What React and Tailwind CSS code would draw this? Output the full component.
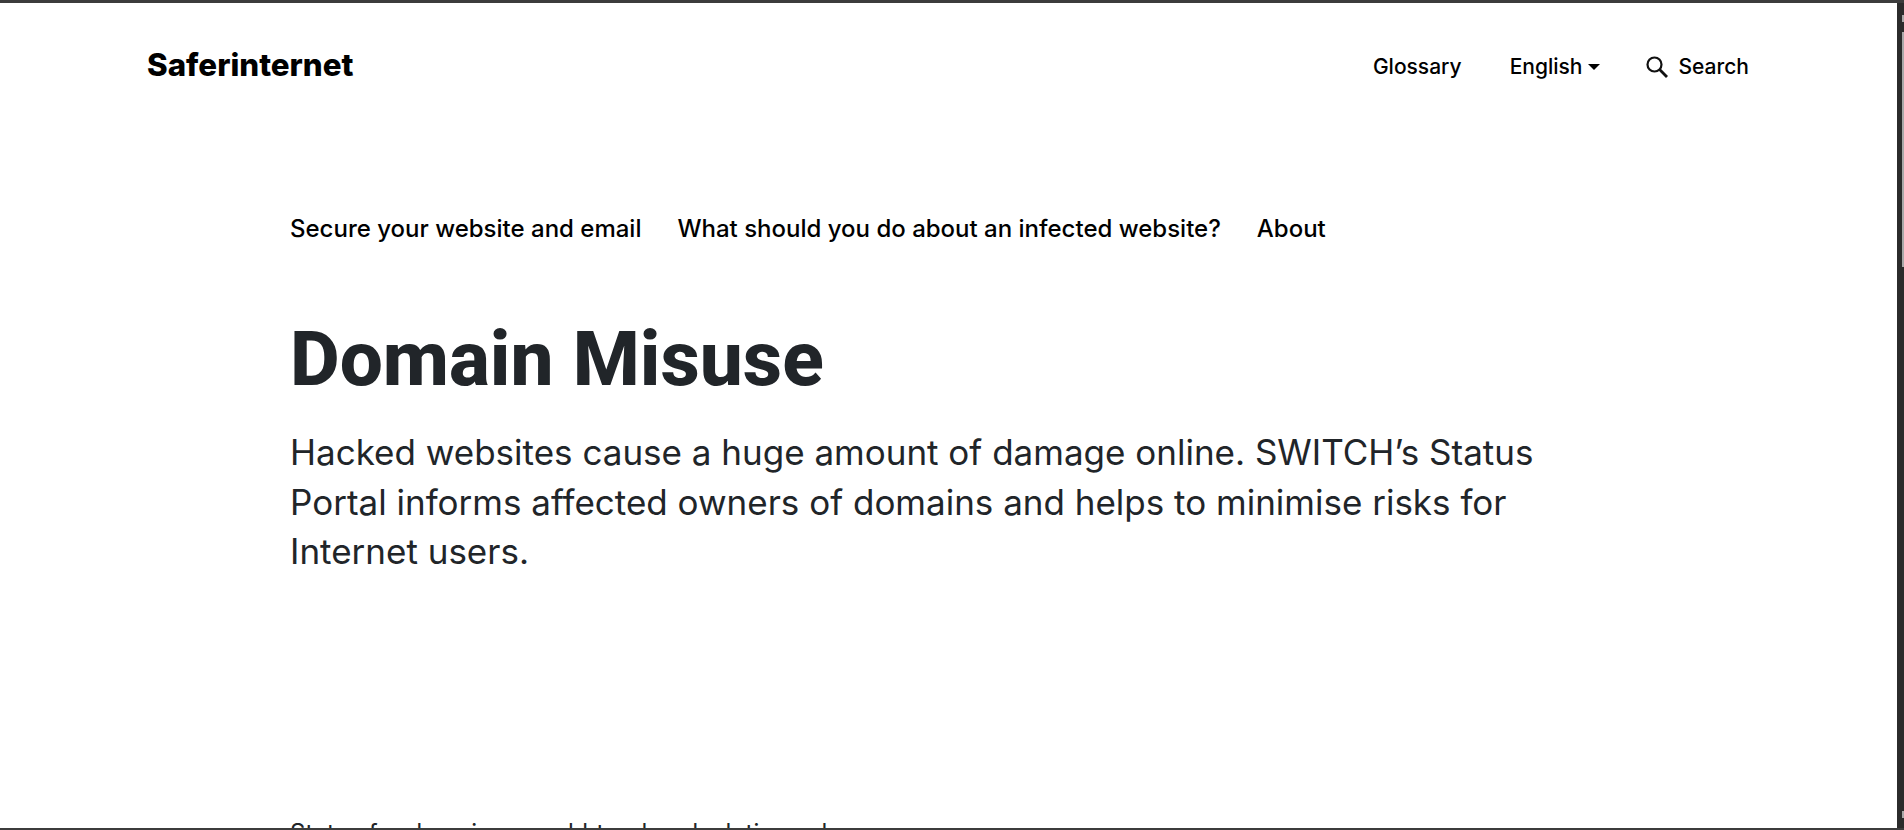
import React from "react";

function SearchIcon() {
  return (
    <svg width="24" height="24" viewBox="0 0 24 24" fill="none" stroke="#111" className="shrink-0">
      <circle cx="9.5" cy="9.5" r="7" strokeWidth="2.2" />
      <path d="M14.6 14.6 L22 22" strokeWidth="2.8" />
    </svg>
  );
}

export default function App() {
  return (
    <div className="h-[830px] w-[1904px] overflow-hidden bg-white flex flex-col font-['Inter','Roboto',sans-serif] border-t-[3px] border-b-[2px] border-[#3c3c3c]">
      <div className="flex-1 min-h-0 flex">
        <div className="flex-1 min-w-0 overflow-hidden">
          <header className="flex items-center justify-between h-[64px] mt-[32px] pl-[147px] pr-[148px] text-black">
            <span className="text-[31.3px] font-extrabold leading-none mb-[3px]">Saferinternet</span>
            <nav className="flex items-center text-[21px] font-medium">
              <span>Glossary</span>
              <span className="ml-[48px] flex items-center">
                English
                <span className="ml-[6px] w-0 h-0 border-x-[6px] border-x-transparent border-t-[6px] border-t-black" />
              </span>
              <span className="ml-[45px] flex items-center gap-[9px]">
                <SearchIcon />
                Search
              </span>
            </nav>
          </header>
          <div className="pl-[290px]">
            <nav className="mt-[112px] flex gap-[36px] text-[24px] font-medium text-black leading-[36px]">
              <span>Secure your website and email</span>
              <span>What should you do about an infected website?</span>
              <span>About</span>
            </nav>
            <h1 className="mt-[64px] font-['Roboto',sans-serif] text-[76.6px] font-extrabold leading-[96px] text-[#212529]">Domain Misuse</h1>
            <p className="mt-[21px] w-[1290px] text-[35px] leading-[49.6px] text-[#212529]">
              Hacked websites cause a huge amount of damage online. SWITCH’s Status Portal informs affected owners of domains and helps to minimise risks for Internet users.
            </p>
            <p className="mt-[238px] text-[24px] leading-[36px] tracking-[0.07px] text-[#212529]">Status for domain name hhtrauhandsolutions.ch</p>
          </div>
        </div>
        <div className="w-[7px] bg-[#2b2b2b] flex flex-col items-end pt-[12px] pb-[10px]">
          <div className="w-[2px] h-[7px] bg-[#a8a8a8]" />
          <div className="w-[2px] h-[235px] mt-[10px] bg-[#a8a8a8]" />
          <div className="flex-1" />
          <div className="w-[2px] h-[7px] bg-[#a8a8a8]" />
        </div>
      </div>
    </div>
  );
}
